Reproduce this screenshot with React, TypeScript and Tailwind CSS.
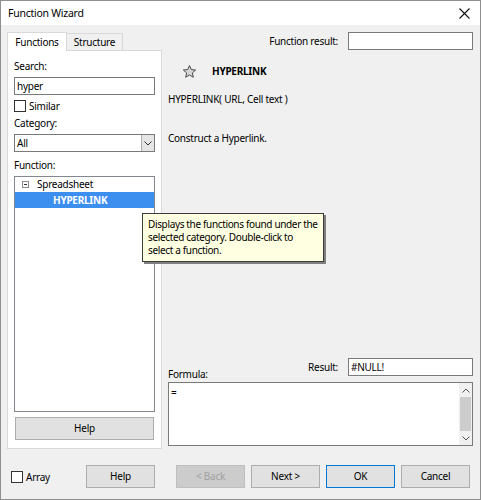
import React from "react";

const font = { fontFamily: '"Noto Sans", "Open Sans", sans-serif' };

function Check({ label }: { label: string }) {
  return (
    <div className="flex items-center h-[13px]">
      <div className="w-[12px] h-[12px] border border-[#333333] bg-white" />
      <span className="ml-[3px] leading-none">{label}</span>
    </div>
  );
}

function Btn({
  label,
  w,
  disabled,
  primary,
}: {
  label: string;
  w: string;
  disabled?: boolean;
  primary?: boolean;
}) {
  const cls = disabled
    ? "bg-[#cccccc] border-[#bfbfbf] text-[#a0a0a0]"
    : primary
    ? "bg-[#e1e1e1] border-[#0078d7] text-black"
    : "bg-[#e1e1e1] border-[#adadad] text-black";
  return (
    <div
      className={`${w} h-[23px] border ${cls} flex items-center justify-center shrink-0`}
    >
      {label}
    </div>
  );
}

export default function App() {
  return (
    <div
      className="w-[481px] h-[500px] border border-[#8f8f8f] flex flex-col text-[10px] tracking-[-0.25px] text-black relative overflow-hidden"
      style={font}
    >
      {/* Title bar */}
      <div className="h-[24px] bg-white flex items-center pl-[7px] pr-[8px] shrink-0">
        <span className="text-[10.5px] mt-[1px]">Function Wizard</span>
        <div className="ml-auto mr-[2px]">
          <svg width="11" height="11" viewBox="0 0 11 11">
            <path d="M0.5 0.5 L10.5 10.5 M10.5 0.5 L0.5 10.5" stroke="#111" strokeWidth="1.1" />
          </svg>
        </div>
      </div>

      {/* Body */}
      <div className="flex-1 bg-[#f0f0f0] flex flex-col relative">
        <div className="flex pt-[7px]">
          {/* Left column */}
          <div className="ml-[6px] w-[155px] flex flex-col">
            <div className="flex items-end h-[19px] relative z-10">
              <div className="w-[60px] h-[19px] bg-white border border-b-0 border-[#d9d9d9] flex items-center justify-center">
                Functions
              </div>
              <div className="w-[56px] h-[17px] bg-[#f0f0f0] border border-l-0 border-b-0 border-[#d9d9d9] flex items-center justify-center mb-[1px]">
                Structure
              </div>
            </div>
            <div className="-mt-[1px] h-[399px] bg-white border border-[#d9d9d9] px-[6px] flex flex-col">
              <div className="mt-[8px] h-[14px] flex items-center">Search:</div>
              <div className="mt-[4px] h-[18px] border border-[#7a7a7a] bg-white flex items-center px-[2px]">
                hyper
              </div>
              <div className="mt-[4px]">
                <Check label="Similar" />
              </div>
              <div className="mt-[4px] h-[14px] flex items-center">Category:</div>
              <div className="mt-[4px] h-[18px] border border-[#7a7a7a] bg-white flex items-center">
                <span className="pl-[2px]">All</span>
                <div className="ml-auto w-[13px] h-[16px] bg-[#e5e5e5] border-l border-[#adadad] flex items-center justify-center">
                  <svg width="8" height="5" viewBox="0 0 8 5">
                    <path d="M0.5 0.5 L4 4 L7.5 0.5" stroke="#333" strokeWidth="1" fill="none" />
                  </svg>
                </div>
              </div>
              <div className="mt-[6px] h-[14px] flex items-center">Function:</div>
              <div className="mt-[4px] h-[236px] border border-[#828790] bg-white flex flex-col">
                <div className="h-[15px] flex items-center">
                  <div className="ml-[7px] w-[7px] h-[7px] border border-[#8c8c8c] flex items-center justify-center">
                    <div className="w-[3px] h-[1px] bg-[#333]" />
                  </div>
                  <span className="ml-[8px]">Spreadsheet</span>
                </div>
                <div className="h-[16px] bg-[#3d8fef] flex items-center text-white font-bold">
                  <span className="ml-[38px]">HYPERLINK</span>
                </div>
              </div>
              <div className="mt-[5px] h-[23px] bg-[#e1e1e1] border border-[#adadad] flex items-center justify-center mx-[1px]">
                Help
              </div>
            </div>
          </div>

          {/* Right column */}
          <div className="ml-[6px] w-[305px] flex flex-col">
            <div className="h-[18px] flex items-center">
              <span className="ml-auto">Function result:</span>
              <div className="ml-[10px] w-[125px] h-[18px] border border-[#7a7a7a] bg-white" />
            </div>
            <div className="mt-[13px] h-[16px] flex items-center">
              <svg className="ml-[14px]" width="15" height="15" viewBox="0 0 24 24">
                <path
                  d="M12 2.5 L14.9 8.9 L21.8 9.6 L16.6 14.3 L18.1 21.2 L12 17.6 L5.9 21.2 L7.4 14.3 L2.2 9.6 L9.1 8.9 Z"
                  fill="#d4d4d4"
                  stroke="#4a4a4a"
                  strokeWidth="1.6"
                  strokeLinejoin="round"
                />
              </svg>
              <span className="ml-[15px] font-bold">HYPERLINK</span>
            </div>
            <div className="mt-[13px] h-[14px] flex items-center">HYPERLINK( URL, Cell text )</div>
            <div className="mt-[25px] h-[14px] flex items-center">Construct a Hyperlink.</div>
            <div className="mt-[213px] h-[18px] flex items-center">
              <span className="self-end mb-[-6px]">Formula:</span>
              <span className="ml-auto">Result:</span>
              <div className="ml-[10px] w-[125px] h-[18px] border border-[#7a7a7a] bg-white flex items-center px-[2px]">
                #NULL!
              </div>
            </div>
            <div className="mt-[6px] h-[64px] border border-[#7a7a7a] bg-white flex">
              <div className="flex-1 pl-[2px] pt-[2px] leading-[14px]">=</div>
              <div className="w-[13px] bg-[#f0f0f0] flex flex-col items-center">
                <div className="h-[14px] flex items-center justify-center">
                  <svg width="8" height="5" viewBox="0 0 8 5">
                    <path d="M0.5 4.5 L4 1 L7.5 4.5" stroke="#555" strokeWidth="1" fill="none" />
                  </svg>
                </div>
                <div className="w-[11px] h-[34px] bg-[#cdcdcd]" />
                <div className="mt-auto h-[14px] flex items-center justify-center">
                  <svg width="8" height="5" viewBox="0 0 8 5">
                    <path d="M0.5 0.5 L4 4 L7.5 0.5" stroke="#555" strokeWidth="1" fill="none" />
                  </svg>
                </div>
              </div>
            </div>
          </div>
        </div>

        {/* Bottom buttons */}
        <div className="mt-[16px] h-[23px] flex items-center">
          <div className="ml-[10px] w-[75px]">
            <Check label="Array" />
          </div>
          <Btn label="Help" w="w-[69px]" />
          <div className="ml-[21px] flex gap-[6px]">
            <Btn label="< Back" w="w-[69px]" disabled />
            <Btn label="Next >" w="w-[69px]" />
            <Btn label="OK" w="w-[69px]" primary />
            <Btn label="Cancel" w="w-[69px]" />
          </div>
        </div>

        {/* Tooltip */}
        <div className="absolute left-[141px] top-[188px] w-[182px] h-[49px] bg-[#ffffe1] border border-[#3c3c3c] shadow-[2px_2px_0_#808080] pl-[5px] pt-[4px] leading-[13px] whitespace-nowrap tracking-[-0.35px]">
          <div>Displays the functions found under the</div>
          <div>selected category. Double-click to</div>
          <div>select a function.</div>
        </div>
      </div>
    </div>
  );
}
